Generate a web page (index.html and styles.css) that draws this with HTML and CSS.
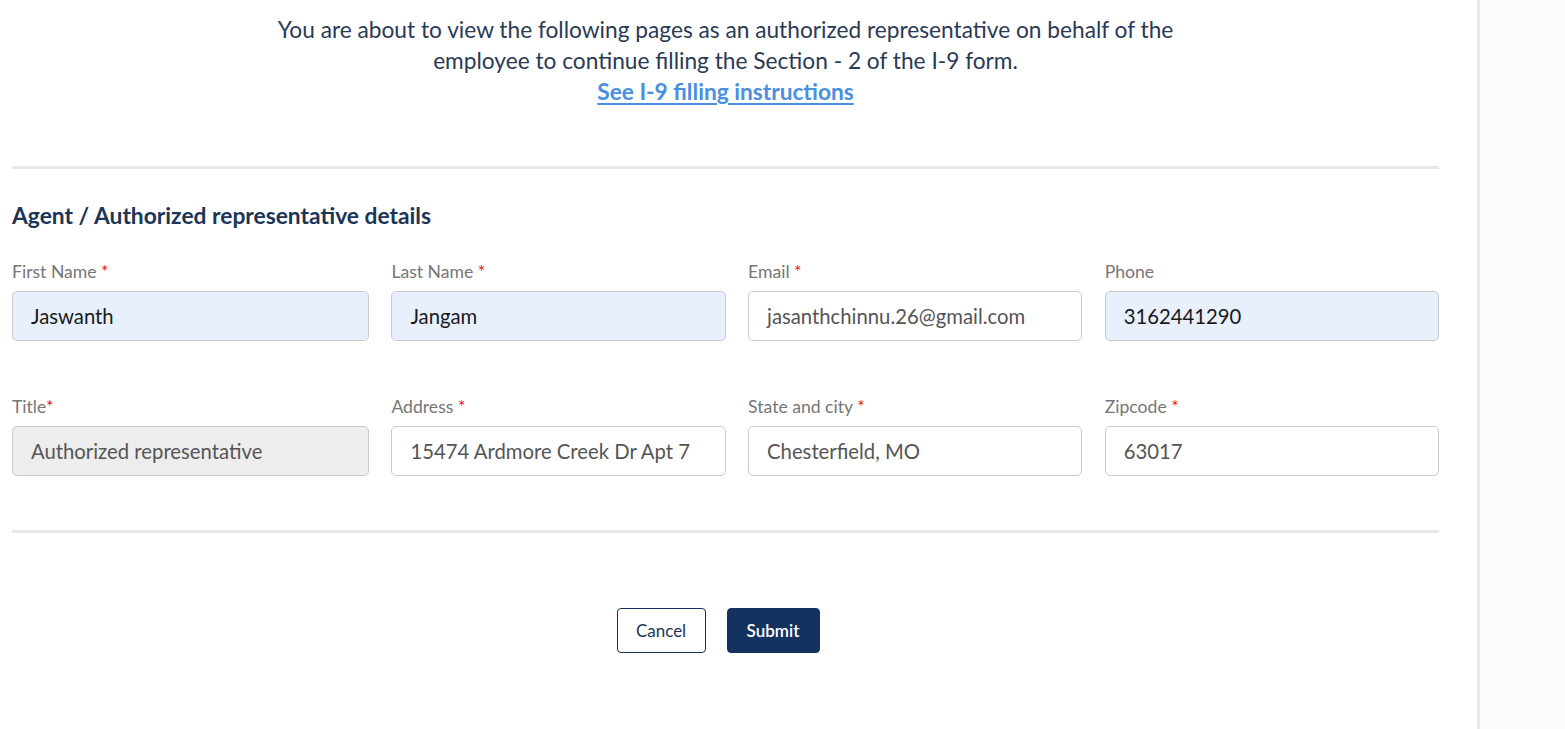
FILE: index.html
```html
<!DOCTYPE html>
<html>
<head>
<meta charset="utf-8">
<link rel="stylesheet" href="styles.css">
</head>
<body>
<div class="page">
  <main class="main">
    <div class="intro">
      <p class="intro-text">You are about to view the following pages as an authorized representative on behalf of the<br>employee to continue filling the Section - 2 of the I-9 form.</p>
      <a class="intro-link" href="#">See I-9 filling instructions</a>
    </div>
    <hr class="divider divider-top">
    <h2 class="section-title">Agent / Authorized representative details</h2>
    <div class="form-grid">
      <div class="field">
        <label class="label">First Name <span class="req">*</span></label>
        <div class="input input-filled">Jaswanth</div>
      </div>
      <div class="field">
        <label class="label">Last Name <span class="req">*</span></label>
        <div class="input input-filled">Jangam</div>
      </div>
      <div class="field">
        <label class="label">Email <span class="req">*</span></label>
        <div class="input input-plain">jasanthchinnu.26@gmail.com</div>
      </div>
      <div class="field">
        <label class="label">Phone</label>
        <div class="input input-filled">3162441290</div>
      </div>
      <div class="field">
        <label class="label">Title<span class="req">*</span></label>
        <div class="input input-disabled">Authorized representative</div>
      </div>
      <div class="field">
        <label class="label">Address <span class="req">*</span></label>
        <div class="input input-plain">15474 Ardmore Creek Dr Apt 7</div>
      </div>
      <div class="field">
        <label class="label">State and city <span class="req">*</span></label>
        <div class="input input-plain">Chesterfield, MO</div>
      </div>
      <div class="field">
        <label class="label">Zipcode <span class="req">*</span></label>
        <div class="input input-plain">63017</div>
      </div>
    </div>
    <hr class="divider divider-bottom">
    <div class="actions">
      <button class="btn btn-cancel">Cancel</button>
      <button class="btn btn-submit">Submit</button>
    </div>
  </main>
  <aside class="side"></aside>
</div>
</body>
</html>
```
FILE: styles.css
```css
* { box-sizing: border-box; }
html, body { margin: 0; padding: 0; height: 100%; }
body {
  font-family: "Lato", "Noto Sans", sans-serif;
  background: #fff;
}
.page {
  display: flex;
  min-height: 729px;
}
.main {
  width: 1480px;
  flex: none;
  padding: 14px 38px 0 12px;
  border-right: 3px solid #e6e9f0;
  background: #fff;
}
.side {
  flex: 1;
  background: #fcfcfc;
}
.intro {
  text-align: center;
  font-size: 22.7px;
  line-height: 31px;
  color: #2a3a55;
}
.intro-text { margin: 0; }
.intro-link {
  color: #4a8fe0;
  font-weight: 700;
  text-decoration: underline;
  text-underline-offset: 3px;
}
.divider {
  border: 0;
  height: 3px;
  background: #e8e8e8;
  margin: 0;
}
.divider-top { margin-top: 59px; }
.section-title {
  margin: 31px 0 0;
  font-size: 22.8px;
  line-height: 30px;
  font-weight: 700;
  color: #1c3456;
}
.form-grid {
  display: grid;
  grid-template-columns: 357px 1fr 1fr 1fr;
  column-gap: 22.4px;
  row-gap: 55px;
  margin-top: 31px;
}
.field { display: flex; flex-direction: column; gap: 8px; }
.label {
  font-size: 17.6px;
  line-height: 22px;
  color: #767676;
}
.req { color: #e8141b; }
.input {
  height: 50px;
  border: 1px solid #cbcbcb;
  border-radius: 5px;
  padding: 0 18px;
  display: flex;
  align-items: center;
  font-size: 20.3px;
  white-space: nowrap;
  overflow: hidden;
}
.input-filled { background: #e8f0fd; color: #1a1a1a; }
.input-plain { background: #fff; color: #555; }
.input-disabled { background: #ededed; color: #555; }
.divider-bottom { margin-top: 54px; }
.actions {
  display: flex;
  justify-content: center;
  gap: 21px;
  margin-top: 75px;
  padding-right: 15px;
}
.btn {
  height: 45px;
  border-radius: 4px;
  font-family: inherit;
  font-size: 17px;
  cursor: pointer;
}
.btn-cancel {
  width: 89px;
  background: #fff;
  border: 1px solid #14325f;
  color: #1c3456;
}
.btn-submit {
  width: 93px;
  background: #14325f;
  border: 1px solid #14325f;
  color: #fff;
  font-weight: 600;
}
```
